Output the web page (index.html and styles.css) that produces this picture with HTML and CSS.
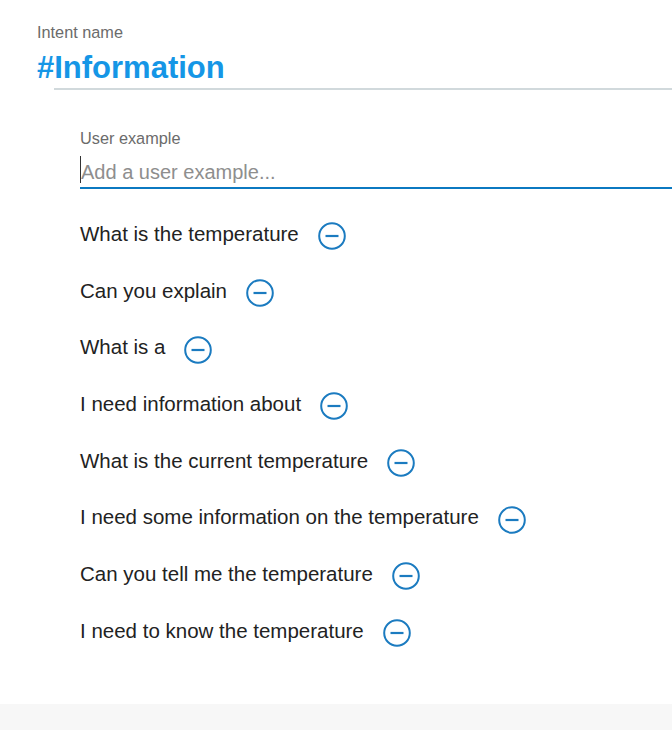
FILE: index.html
```html
<!DOCTYPE html>
<html>
<head>
<meta charset="utf-8">
<link rel="stylesheet" href="styles.css">
</head>
<body>
<div class="page">
  <header class="intent">
    <div class="label">Intent name</div>
    <h1 class="intent-title">#Information</h1>
  </header>
  <div class="rule"></div>
  <section class="examples">
    <div class="label">User example</div>
    <div class="field">
      <input class="field-input" type="text" placeholder="Add a user example...">
    </div>
    <ul class="example-list">
      <li class="example"><span class="example-text">What is the temperature</span><button class="remove" aria-label="Remove"><svg width="28" height="28" viewBox="0 0 28 28"><circle cx="14" cy="14" r="12.8" fill="none" stroke="#1b7bc0" stroke-width="2"/><line x1="7.5" y1="14" x2="20.5" y2="14" stroke="#1b7bc0" stroke-width="2.2"/></svg></button></li>
      <li class="example"><span class="example-text">Can you explain</span><button class="remove" aria-label="Remove"><svg width="28" height="28" viewBox="0 0 28 28"><circle cx="14" cy="14" r="12.8" fill="none" stroke="#1b7bc0" stroke-width="2"/><line x1="7.5" y1="14" x2="20.5" y2="14" stroke="#1b7bc0" stroke-width="2.2"/></svg></button></li>
      <li class="example"><span class="example-text">What is a</span><button class="remove" aria-label="Remove"><svg width="28" height="28" viewBox="0 0 28 28"><circle cx="14" cy="14" r="12.8" fill="none" stroke="#1b7bc0" stroke-width="2"/><line x1="7.5" y1="14" x2="20.5" y2="14" stroke="#1b7bc0" stroke-width="2.2"/></svg></button></li>
      <li class="example"><span class="example-text">I need information about</span><button class="remove" aria-label="Remove"><svg width="28" height="28" viewBox="0 0 28 28"><circle cx="14" cy="14" r="12.8" fill="none" stroke="#1b7bc0" stroke-width="2"/><line x1="7.5" y1="14" x2="20.5" y2="14" stroke="#1b7bc0" stroke-width="2.2"/></svg></button></li>
      <li class="example"><span class="example-text">What is the current temperature</span><button class="remove" aria-label="Remove"><svg width="28" height="28" viewBox="0 0 28 28"><circle cx="14" cy="14" r="12.8" fill="none" stroke="#1b7bc0" stroke-width="2"/><line x1="7.5" y1="14" x2="20.5" y2="14" stroke="#1b7bc0" stroke-width="2.2"/></svg></button></li>
      <li class="example"><span class="example-text">I need some information on the temperature</span><button class="remove" aria-label="Remove"><svg width="28" height="28" viewBox="0 0 28 28"><circle cx="14" cy="14" r="12.8" fill="none" stroke="#1b7bc0" stroke-width="2"/><line x1="7.5" y1="14" x2="20.5" y2="14" stroke="#1b7bc0" stroke-width="2.2"/></svg></button></li>
      <li class="example"><span class="example-text">Can you tell me the temperature</span><button class="remove" aria-label="Remove"><svg width="28" height="28" viewBox="0 0 28 28"><circle cx="14" cy="14" r="12.8" fill="none" stroke="#1b7bc0" stroke-width="2"/><line x1="7.5" y1="14" x2="20.5" y2="14" stroke="#1b7bc0" stroke-width="2.2"/></svg></button></li>
      <li class="example"><span class="example-text">I need to know the temperature</span><button class="remove" aria-label="Remove"><svg width="28" height="28" viewBox="0 0 28 28"><circle cx="14" cy="14" r="12.8" fill="none" stroke="#1b7bc0" stroke-width="2"/><line x1="7.5" y1="14" x2="20.5" y2="14" stroke="#1b7bc0" stroke-width="2.2"/></svg></button></li>
    </ul>
  </section>
  <div class="spacer"></div>
  <footer class="footer"></footer>
</div>
</body>
</html>
```

FILE: styles.css
```css
html, body {
  margin: 0;
  padding: 0;
  background: #ffffff;
  overflow: hidden;
}

.page {
  height: 730px;
  display: flex;
  flex-direction: column;
  font-family: "Liberation Sans", Arial, Helvetica, sans-serif;
}

.label {
  font-size: 16.3px;
  line-height: 20px;
  color: #6b6b6b;
}

.intent {
  padding: 22px 0 0 37px;
}

.intent-title {
  margin: 8px 0 0 0;
  font-size: 31px;
  line-height: 36px;
  font-weight: bold;
  color: #1596e6;
}

.rule {
  margin: 2px 0 0 54px;
  height: 2px;
  background: #d1d9dc;
}

.examples {
  padding: 38px 0 0 80px;
}

.field {
  position: relative;
  margin-top: 9px;
}

.field::before {
  content: "";
  position: absolute;
  left: 0;
  top: -1px;
  width: 1px;
  height: 27px;
  background: #333;
}

.field-input {
  display: block;
  box-sizing: content-box;
  width: 100%;
  height: 30px;
  margin: 0;
  padding: 0 0 0 1px;
  border: 0;
  border-bottom: 2px solid #0b79c1;
  outline: none;
  background: transparent;
  font-family: "Liberation Sans", Arial, Helvetica, sans-serif;
  font-size: 20px;
  color: #222;
}

.field-input::placeholder {
  color: #8e8e8e;
  opacity: 1;
}

.example-list {
  list-style: none;
  margin: 16.5px 0 0 0;
  padding: 0;
}

.example {
  display: flex;
  align-items: center;
  height: 56.7px;
}

.example-text {
  font-size: 20.5px;
  line-height: 24px;
  color: #222222;
}

.remove {
  display: flex;
  margin: 5px 0 0 19px;
  padding: 0;
  border: 0;
  background: none;
  width: 28px;
  height: 28px;
}

.spacer {
  flex: 1;
}

.footer {
  height: 26px;
  background: #f7f7f7;
}
```
